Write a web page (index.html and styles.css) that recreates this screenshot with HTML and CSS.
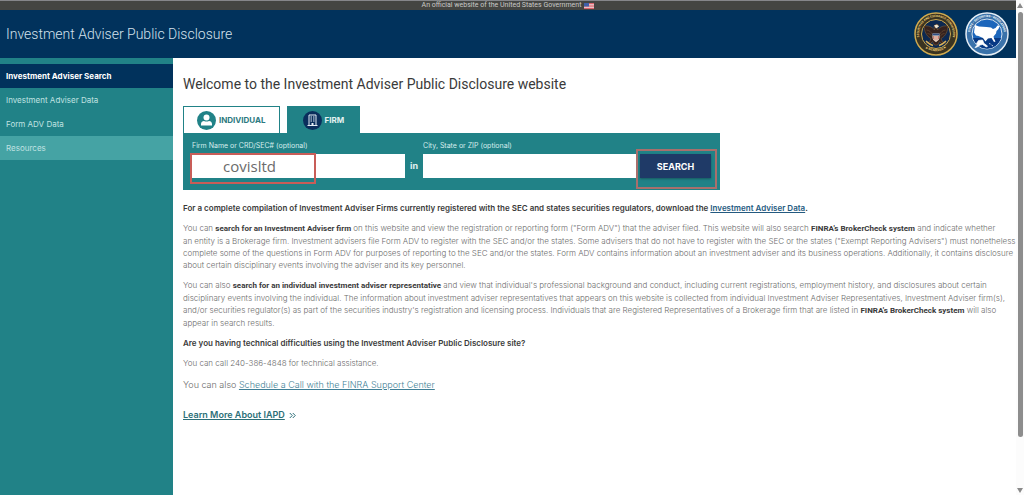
FILE: index.html
```html
<!DOCTYPE html>
<html lang="en">
<head>
<meta charset="utf-8">
<meta name="viewport" content="width=device-width, initial-scale=1">
<title>Investment Adviser Public Disclosure</title>
<link rel="stylesheet" href="styles.css">
</head>
<body>
<div class="window">
  <div class="page">
    <div class="gov-banner">
      <span>An official website of the United States Government</span>
      <svg class="flag" viewBox="0 0 20 12" aria-hidden="true">
        <rect width="20" height="12" fill="#f3e9ea"/>
        <path d="M0 1h20M0 4.3h20M0 7.6h20M0 11h20" stroke="#d4525c" stroke-width="1.8"/>
        <rect width="10" height="7" fill="#3f5fa8"/>
      </svg>
    </div>
    <header class="site-header">
      <div class="site-title">Investment Adviser Public Disclosure</div>
      <div class="seals">
        <svg class="seal" viewBox="0 0 88 88" role="img" aria-label="Securities and Exchange Commission seal">
          <defs>
            <path id="sec-top" d="M14 60A34 34 0 1 1 74 60"/>
            <path id="sec-bottom" d="M15 65A38 38 0 0 0 73 65"/>
          </defs>
          <circle cx="44" cy="44" r="42" fill="#3a3421" stroke="#cfa94e" stroke-width="3"/>
          <circle cx="44" cy="44" r="29" fill="#0c2850" stroke="#cfa94e" stroke-width="2"/>
          <text class="seal-text seal-gold"><textPath href="#sec-top" startOffset="50%" text-anchor="middle">SECURITIES AND EXCHANGE COMMISSION</textPath></text>
          <text class="seal-text seal-gold"><textPath href="#sec-bottom" startOffset="50%" text-anchor="middle">★ MCMXXXIV ★</textPath></text>
          <path d="M40 29c1-5 8-6 10-1l-4 1 1 7c5-7 13-9 21-8-1 10-4 20-14 25l3 7 7 2-9 1-4-4-4 7h-6l-4-7-4 4-9-1 7-2 3-7c-10-5-13-15-14-25 8-1 16 1 21 8z" fill="#35221e" stroke="#8c6534" stroke-width="1"/>
          <path d="M25 36c6 1 9 4 11 8M27 43c4 0 7 3 9 6M63 36c-6 1-9 4-11 8M61 43c-4 0-7 3-9 6" fill="none" stroke="#7d5a38"/>
          <path d="M40 27l6-2 4 4-6 4z" fill="#eee5d2"/>
          <path d="M37 43h14v8c0 5-4 7-7 9-3-2-7-4-7-9z" fill="#eee5d2"/>
          <path d="M39 48v6M42 48v9M46 48v9M49 48v6" stroke="#b94b45" stroke-width="1.4"/>
          <path d="M37 43h14v4H37z" fill="#324f86"/>
          <path d="M24 58c6 6 9 8 14 9M64 58c-6 6-9 8-14 9" fill="none" stroke="#d8b25a" stroke-width="3"/>
        </svg>
        <svg class="seal" viewBox="0 0 88 88" role="img" aria-label="State securities regulators seal">
          <defs>
            <path id="state-top" d="M14 60A34 34 0 1 1 74 60"/>
          </defs>
          <circle cx="44" cy="44" r="42" fill="#3a72aa" stroke="#e4edf5" stroke-width="3"/>
          <circle cx="44" cy="44" r="30" fill="#1c66bb" stroke="#d3e1ef" stroke-width="2"/>
          <path d="M16 52a29 29 0 0 0 56 0z" fill="#073984"/>
          <text class="seal-text seal-white"><textPath href="#state-top" startOffset="50%" text-anchor="middle">STATE • SECURITIES • REGULATORS</textPath></text>
          <path d="M20 26l8 3 15 1 9 1 4 3 5-2 4-5 4 1-2 6-4 4-1 5-5 6 1 4 3 6-3 1-5-8-7 1-5 6-5-7-9-4-5-1-4-6z" fill="#fff"/>
          <path d="M23 63l4-6 8-1 3 7 7 5-2 2-8-5-5 1-6 4-4 1 5-5zM48 63l3 1M53 66l3 2" fill="#fff" stroke="#fff" stroke-width="1.5"/>
        </svg>
      </div>
    </header>
    <div class="body">
      <nav class="sidebar" aria-label="Main">
        <a class="nav-link nav-active" href="#search">Investment Adviser Search</a>
        <a class="nav-link" href="#data">Investment Adviser Data</a>
        <a class="nav-link" href="#adv">Form ADV Data</a>
        <a class="nav-link nav-hover" href="#resources">Resources</a>
      </nav>
      <main class="content">
        <h1 class="heading">Welcome to the Investment Adviser Public Disclosure website</h1>
        <form class="search" onsubmit="return false">
          <div class="tabs">
            <button class="tab" type="button">
              <svg class="tab-icon" viewBox="0 0 38 38" aria-hidden="true"><circle cx="19" cy="19" r="19" fill="#218287"/><circle cx="19" cy="13" r="6" fill="#fff"/><path d="M8 29v-3c0-4 3-6 6-6 3 1.500 7 1.500 10 0 3 0 6 2 6 6v3z" fill="#fff"/></svg>
              INDIVIDUAL
            </button>
            <button class="tab tab-selected" type="button">
              <svg class="tab-icon" viewBox="0 0 38 38" aria-hidden="true"><circle cx="19" cy="19" r="19" fill="#0a2e5c"/><path d="M12 8h14v21H12zM9 29h20" fill="none" stroke="#e4edf5" stroke-width="2"/><path d="M15 12h3M20 12h3M15 16h3M20 16h3M15 20h3M20 20h3" stroke="#e4edf5" stroke-width="2"/><path d="M17 29v-5h4v5" fill="#e4edf5"/></svg>
              FIRM
            </button>
          </div>
          <div class="panel">
            <div class="field">
              <label for="firm">Firm Name or CRD/SEC# (optional)</label>
              <input id="firm" type="text" value="covisltd">
              <span class="mark mark-firm"></span>
            </div>
            <span class="in">in</span>
            <div class="field">
              <label for="place">City, State or ZIP (optional)</label>
              <input id="place" type="text">
            </div>
            <div class="action">
              <button class="submit" type="submit">SEARCH</button>
              <span class="mark mark-submit"></span>
            </div>
          </div>
        </form>
        <p class="strong">For a complete compilation of Investment Adviser Firms currently registered with the SEC and states securities regulators, download the <a class="data-link" href="#data">Investment Adviser Data</a>.</p>
        <p>You can <b>search for an Investment Adviser firm</b> on this website and view the registration or reporting form ("Form ADV") that the adviser filed. This website will also search <b>FINRA's BrokerCheck system</b> and indicate whether<br> an entity is a Brokerage firm. Investment advisers file Form ADV to register with the SEC and/or the states. Some advisers that do not have to register with the SEC or the states ("Exempt Reporting Advisers") must nonetheless<br> complete some of the questions in Form ADV for purposes of reporting to the SEC and/or the states. Form ADV contains information about an investment adviser and its business operations. Additionally, it contains disclosure<br> about certain disciplinary events involving the adviser and its key personnel.</p>
        <p>You can also <b>search for an individual investment adviser representative</b> and view that individual's professional background and conduct, including current registrations, employment history, and disclosures about certain<br> disciplinary events involving the individual. The information about investment adviser representatives that appears on this website is collected from individual Investment Adviser Representatives, Investment Adviser firm(s),<br> and/or securities regulator(s) as part of the securities industry's registration and licensing process. Individuals that are Registered Representatives of a Brokerage firm that are listed in <b>FINRA's BrokerCheck system</b> will also<br> appear in search results.</p>
        <p class="strong">Are you having technical difficulties using the Investment Adviser Public Disclosure site?</p>
        <p>You can call 240-386-4848 for technical assistance.</p>
        <p class="support">You can also <a class="support-link" href="#support">Schedule a Call with the FINRA Support Center</a></p>
        <p class="more"><a class="more-link" href="#learn">Learn More About IAPD</a>
          <svg class="chevrons" viewBox="0 0 14 14" aria-hidden="true"><path d="M1.500 2l5 5-5 5M7.500 2l5 5-5 5" fill="none" stroke="#2c6f78" stroke-width="2"/></svg>
        </p>
      </main>
    </div>
  </div>
  <div class="scrollbar" aria-hidden="true">
    <svg class="arrow" viewBox="0 0 6 5"><path d="M3 0l3 5H0z" fill="#8a8a8a"/></svg>
    <div class="track"><div class="thumb"></div></div>
    <svg class="arrow" viewBox="0 0 6 5"><path d="M3 5l3-5H0z" fill="#8a8a8a"/></svg>
  </div>
</div>
</body>
</html>
```
FILE: styles.css
```css
* { box-sizing: border-box; }
body { margin: 0; font-family: Inter, Roboto, sans-serif; background: #fff; }
button, input { font-family: inherit; border: 0; margin: 0; }
.window { display: flex; min-height: 100vh; }
.page { flex: 1; min-width: 0; display: flex; flex-direction: column; }

.gov-banner {
  display: flex; align-items: center; justify-content: center; gap: 3px;
  height: 10px; background: #444542; border-top: 1px solid #85868a;
  color: #c9c9c7; font-family: Roboto, sans-serif; font-size: 7px; line-height: 9px;
}
.flag { width: 10px; height: 6px; }

.site-header {
  display: flex; align-items: center; justify-content: space-between;
  height: 48px; padding: 0 7px 0 6px; background: #01325c;
}
.site-title { color: #d3e1ec; font-family: Roboto, sans-serif; font-size: 14px; font-weight: 300; }
.seals { display: flex; gap: 7px; }
.seal { width: 44px; height: 44px; }
.seal-text { font-family: Roboto, sans-serif; font-size: 6px; font-weight: 700; }
.seal-gold { fill: #f0cf78; }
.seal-white { fill: #fff; }

.body { flex: 1; display: flex; }
.sidebar { flex: 0 0 173px; padding-top: 6px; background: #218287; }
.nav-link {
  display: block; padding: 0 6px; color: #c0e2e2; font-size: 8px;
  line-height: 24px; text-decoration: none;
}
.nav-active { background: #01325c; color: #fff; font-weight: 700; }
.nav-hover { background: #45a3a4; }

.content { flex: 1; min-width: 0; padding: 17px 0 17px 10px; }
.heading { margin: 0 0 13px; color: #3a3a3a; font-family: Roboto, sans-serif; font-size: 14px; line-height: 18px; font-weight: 400; }

.search { max-width: 537px; margin-bottom: 12px; }
.tabs { display: flex; gap: 7px; }
.tab {
  display: flex; align-items: center; gap: 3px; height: 27px; padding: 0 13px;
  border: 1px solid #218287; border-bottom: 0; background: #fff;
  color: #2c7a80; font-size: 8px; font-weight: 700;
}
.tab-selected { padding: 0 15px; background: #218287; color: #e4f2f2; }
.tab-icon { width: 19px; height: 19px; }
.panel { display: flex; align-items: flex-end; height: 57px; padding: 0 9px 12px; background: #218287; }
.field { position: relative; flex: 1; }
.field label { display: block; margin-bottom: 4px; color: #d6eded; font-size: 7px; line-height: 9px; }
.field input { display: block; width: 100%; height: 24px; padding: 0 31px; background: #fff; color: #6b6b6b; font-family: "Open Sans", sans-serif; font-size: 15px; }
.in { padding: 0 5px; color: #e4f2f2; font-size: 9px; font-weight: 700; line-height: 24px; }
.action { position: relative; margin-left: 4px; }
.submit { display: block; width: 71px; height: 24px; background: #1f3a67; color: #fff; font-size: 9px; font-weight: 700; box-shadow: 0 1px 2px #17585f; }
.mark { position: absolute; pointer-events: none; }
.mark-firm { left: -2px; right: 89px; top: 12px; bottom: -6px; border: 2px solid #c85d58; }
.mark-submit { inset: -5px -6px -11px -4px; border: 2px solid #a96f6c; }

p { margin: 0 0 8px; color: #6c6c6c; font-size: 8px; line-height: 12px; font-weight: 300; }
b, .strong { color: #3a3a3a; font-weight: 600; }
b { font-family: Roboto, sans-serif; font-weight: 700; }
.data-link { color: #245a80; }
.support { margin-bottom: 14px; font-size: 9px; line-height: 16px; }
.support-link { color: #3f7f96; }
.more { display: flex; align-items: center; gap: 4px; font-size: 9px; line-height: 16px; }
.more-link { color: #2c6f78; font-weight: 600; }
.chevrons { width: 7px; height: 7px; }

.scrollbar { flex: 0 0 8px; display: flex; flex-direction: column; align-items: center; gap: 4px; padding: 3px 0 2px; background: #fcfcfc; }
.arrow { width: 6px; height: 5px; }
.track { flex: 1; }
.thumb { width: 5px; height: 90%; border-radius: 3px; background: #8d8d8d; }
```
